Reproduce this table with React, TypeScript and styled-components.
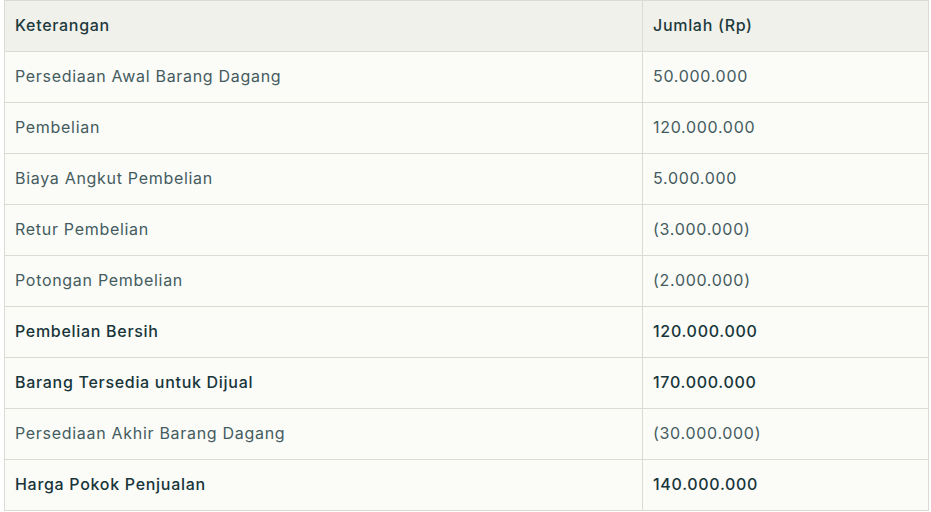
import React, {FC} from 'react'
import styled, {createGlobalStyle} from "styled-components";

const GlobalStyle = createGlobalStyle`
  body {
    margin: 0;
    background: #ffffff;
    font-family: Inter, "Noto Sans", sans-serif;
  }
`;

const Root = styled.div`
  padding: 0 2px 0 4px;
`;

const Table = styled.table`
  width: 925px;
  border-collapse: collapse;
  border: 1px solid #dadbd2;
  font-size: 16px;
  letter-spacing: 0.7px;
`;

const HeadCell = styled.th<{ $narrow?: boolean }>`
  height: 47px;
  padding: 0 0 3px 10px;
  text-align: left;
  font-weight: 500;
  color: #1d3a3c;
  background: #f1f1ec;
  border: 1px solid #dadbd2;
  width: ${({$narrow}) => $narrow ? '275px' : 'auto'};
`;

const Cell = styled.td<{ $strong?: boolean }>`
  height: 47px;
  padding: 0 0 3px 10px;
  background: #fbfbf7;
  border: 1px solid #dadbd2;
  color: ${({$strong}) => $strong ? '#17353a' : '#445c5f'};
  font-weight: ${({$strong}) => $strong ? 500 : 400};
`;

type Row = {
    label: string
    amount: string
    strong?: boolean
}

const rows: Row[] = [
    {label: 'Persediaan Awal Barang Dagang', amount: '50.000.000'},
    {label: 'Pembelian', amount: '120.000.000'},
    {label: 'Biaya Angkut Pembelian', amount: '5.000.000'},
    {label: 'Retur Pembelian', amount: '(3.000.000)'},
    {label: 'Potongan Pembelian', amount: '(2.000.000)'},
    {label: 'Pembelian Bersih', amount: '120.000.000', strong: true},
    {label: 'Barang Tersedia untuk Dijual', amount: '170.000.000', strong: true},
    {label: 'Persediaan Akhir Barang Dagang', amount: '(30.000.000)'},
    {label: 'Harga Pokok Penjualan', amount: '140.000.000', strong: true},
]

const App: FC = () => {
    return (
        <Root>
            <GlobalStyle/>
            <Table>
                <thead>
                <tr>
                    <HeadCell>Keterangan</HeadCell>
                    <HeadCell $narrow>Jumlah (Rp)</HeadCell>
                </tr>
                </thead>
                <tbody>
                {rows.map((row, index) => (
                    <tr key={index}>
                        <Cell $strong={row.strong}>{row.label}</Cell>
                        <Cell $strong={row.strong}>{row.amount}</Cell>
                    </tr>
                ))}
                </tbody>
            </Table>
        </Root>
    )
}

export default App;
